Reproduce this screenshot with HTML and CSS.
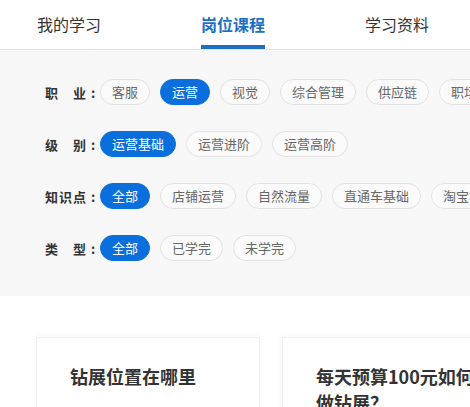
FILE: index.html
```html
<!DOCTYPE html>
<html lang="zh-CN">

  <head>
    <meta charset="UTF-8">
    <meta name="viewport" content="width=device-width, initial-scale=1.0">
    <title>岗位课程</title>
    <link rel="stylesheet" href="styles.css">
  </head>

  <body>
    <!-- 顶部切换 -->
    <div class="tabs">
      <div class="tab">我的学习</div>
      <div class="tab active">岗位课程</div>
      <div class="tab">学习资料</div>
    </div>

    <!-- 筛选条件 -->
    <div class="filter">
      <div class="row">
        <span class="label">职　业 :</span>
        <span class="chip">客服</span>
        <span class="chip on">运营</span>
        <span class="chip">视觉</span>
        <span class="chip">综合管理</span>
        <span class="chip">供应链</span>
        <span class="chip">职场技能</span>
      </div>
      <div class="row">
        <span class="label">级　别 :</span>
        <span class="chip on">运营基础</span>
        <span class="chip">运营进阶</span>
        <span class="chip">运营高阶</span>
      </div>
      <div class="row">
        <span class="label">知识点 :</span>
        <span class="chip on">全部</span>
        <span class="chip">店铺运营</span>
        <span class="chip">自然流量</span>
        <span class="chip">直通车基础</span>
        <span class="chip">淘宝客</span>
      </div>
      <div class="row">
        <span class="label">类　型 :</span>
        <span class="chip on">全部</span>
        <span class="chip">已学完</span>
        <span class="chip">未学完</span>
      </div>
    </div>

    <!-- 课程卡片 -->
    <div class="cards">
      <div class="card">
        <div class="title">钻展位置在哪里</div>
      </div>
      <div class="card">
        <div class="title">每天预算100元如何做钻展？</div>
      </div>
    </div>
  </body>

</html>
```

FILE: styles.css
```css
* {
  margin: 0;
  padding: 0;
  box-sizing: border-box;
}

body {
  width: 470px;
  height: 407px;
  overflow: hidden;
  background-color: #fff;
  font-family: "Microsoft YaHei", "Noto Sans CJK SC", sans-serif;
  color: #333;
}

.tabs {
  display: flex;
  gap: 100px;
  padding-left: 37px;
  height: 50px;
  border-bottom: 1px solid #e3e3e3;
  white-space: nowrap;
}

.tab {
  height: 49px;
  padding-top: 4px;
  line-height: 41px;
  font-size: 16px;
  color: #333;
  border-bottom: 4px solid transparent;
}

.tab.active {
  color: #1d6fc3;
  font-weight: bold;
  border-bottom-color: #1d6fc3;
}

.filter {
  background-color: #f7f7f7;
  padding: 29px 0 35px 45px;
  display: flex;
  flex-direction: column;
  gap: 26px;
}

.row {
  display: flex;
  align-items: center;
  gap: 10px;
  height: 26px;
  white-space: nowrap;
}

.label {
  flex-shrink: 0;
  width: 55px;
  margin-right: -10px;
  font-size: 13px;
  font-weight: bold;
  color: #333;
  letter-spacing: 1px;
}

.chip {
  flex-shrink: 0;
  height: 26px;
  line-height: 24px;
  padding: 0 11px;
  font-size: 13px;
  color: #666;
  background-color: #fafafa;
  border: 1px solid #e2e2e2;
  border-radius: 13px;
}

.chip.on {
  color: #fff;
  background-color: #0a6fdc;
  border-color: #0a6fdc;
}

.cards {
  display: flex;
  gap: 22px;
  padding: 41px 0 0 36px;
}

.card {
  flex-shrink: 0;
  width: 224px;
  height: 120px;
  padding: 25px 14px 0 33px;
  border: 1px solid #f0f0f0;
  box-shadow: 0 0 6px rgba(0, 0, 0, 0.05);
}

.title {
  font-size: 18px;
  font-weight: bold;
  line-height: 26px;
  color: #333;
}
```
